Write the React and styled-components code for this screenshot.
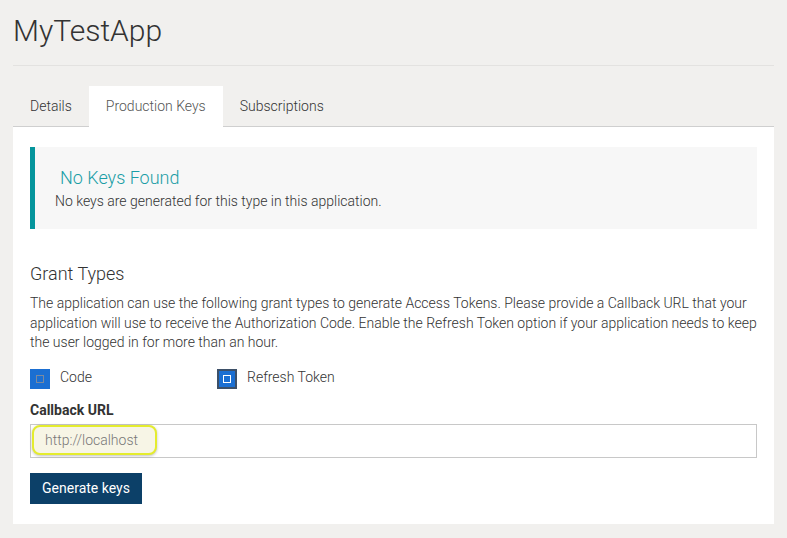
import React from "react";
import styled, { createGlobalStyle } from "styled-components";

const Global = createGlobalStyle`
  html, body { margin: 0; padding: 0; background: #f1f0ee; }
  body { font-family: Roboto, "Liberation Sans", sans-serif; color: #333; }
`;

const Page = styled.div`
  padding: 0 13px 15px 13px;
  width: 761px;
`;

const Title = styled.h1`
  margin: 0;
  padding-top: 12px;
  height: 53px;
  font-size: 30px;
  font-weight: 300;
  color: #333;
  line-height: 38px;
  border-bottom: 1px solid #e3e2e0;
`;

const Tabs = styled.div`
  display: flex;
  margin-top: 20px;
  height: 40px;
  border-bottom: 1px solid #cfcfcf;
`;

const Tab = styled.div`
  height: ${(p) => (p.$active ? "41px" : "40px")};
  padding: 0 17px 1px 17px;
  display: flex;
  align-items: center;
  font-size: 14px;
  font-weight: 300;
  color: ${(p) => (p.$active ? "#555" : "#333")};
  background: ${(p) => (p.$active ? "#fff" : "transparent")};
  box-sizing: border-box;
`;

const Panel = styled.div`
  background: #fff;
  padding: 20px 17px 20px 17px;
`;

const Alert = styled.div`
  background: #f7f7f7;
  border-left: 5px solid #05959c;
  height: 82px;
  box-sizing: border-box;
  padding: 20px 20px 0 20px;
`;

const AlertTitle = styled.div`
  font-size: 18px;
  font-weight: 300;
  color: #1a9ea6;
  line-height: 22px;
  padding-left: 5px;
`;

const AlertText = styled.div`
  margin-top: 1px;
  font-size: 14px;
  font-weight: 300;
  color: #333;
  line-height: 22px;
`;

const SectionTitle = styled.h3`
  margin: 33px 0 0 0;
  font-size: 18px;
  font-weight: 300;
  color: #333;
  line-height: 24px;
`;

const Para = styled.p`
  margin: 8px 0 0 0;
  font-size: 14px;
  font-weight: 300;
  line-height: 19.5px;
  color: #333;
`;

const CheckRow = styled.div`
  display: flex;
  margin-top: 16px;
  height: 20px;
`;

const CheckItem = styled.label`
  display: flex;
  align-items: center;
  gap: 10px;
  width: 187px;
  font-size: 14px;
  font-weight: 300;
  color: #333;
  line-height: 16px;
`;

const LabelText = styled.span`
  margin-top: -3px;
`;

const Box = styled.span`
  width: 20px;
  height: 20px;
  flex: none;
  box-sizing: border-box;
  background: #1b6fd2;
  border: ${(p) => (p.$focus ? "2px solid #3d5068" : "none")};
  display: flex;
  align-items: center;
  justify-content: center;
  &::after {
    content: "";
    width: 6px;
    height: 6px;
    border: 1px solid ${(p) => (p.$focus ? "#fff" : "#7a8aa0")};
  }
`;

const Label = styled.div`
  margin-top: 12px;
  font-size: 14px;
  font-weight: 700;
  color: #333;
  line-height: 18px;
`;

const Input = styled.div`
  margin-top: 5px;
  height: 34px;
  box-sizing: border-box;
  border: 1px solid #c8c8c8;
  position: relative;
`;

const Placeholder = styled.span`
  position: absolute;
  left: 1px;
  top: 0px;
  height: 30px;
  padding: 0 10px 0 11px;
  display: flex;
  align-items: center;
  background: #f7f5e6;
  border: 2px solid #e4ec2e;
  border-radius: 8px;
  box-shadow: 0 1px 3px rgba(0, 0, 0, 0.25);
  font-size: 14px;
  font-weight: 300;
  color: #777;
  box-sizing: border-box;
  width: 125px;
`;

const Button = styled.button`
  margin-top: 15px;
  height: 31px;
  width: 112px;
  border: none;
  background: #0c4068;
  color: #fff;
  font-family: Roboto, "Liberation Sans", sans-serif;
  font-size: 14px;
  padding: 0;
`;

export default function App() {
  return (
    <Page>
      <Global />
      <Title>MyTestApp</Title>
      <Tabs>
        <Tab>Details</Tab>
        <Tab $active>Production Keys</Tab>
        <Tab>Subscriptions</Tab>
      </Tabs>
      <Panel>
        <Alert>
          <AlertTitle>No Keys Found</AlertTitle>
          <AlertText>No keys are generated for this type in this application.</AlertText>
        </Alert>
        <SectionTitle>Grant Types</SectionTitle>
        <Para>
          The application can use the following grant types to generate Access Tokens. Please provide a Callback URL that your application will use to receive the Authorization Code. Enable the Refresh Token option if your application needs to keep the user logged in for more than an hour.
        </Para>
        <CheckRow>
          <CheckItem><Box /><LabelText>Code</LabelText></CheckItem>
          <CheckItem><Box $focus /><LabelText>Refresh Token</LabelText></CheckItem>
        </CheckRow>
        <Label>Callback URL</Label>
        <Input>
          <Placeholder>http://localhost</Placeholder>
        </Input>
        <Button>Generate keys</Button>
      </Panel>
    </Page>
  );
}
